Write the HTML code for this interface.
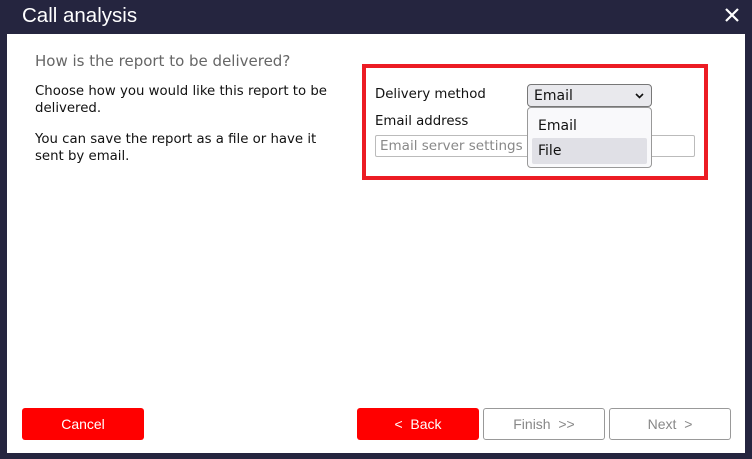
<!DOCTYPE html>
<html><head><style>
*{box-sizing:border-box;margin:0;padding:0}
body{width:752px;height:459px;background:#25253f;position:relative;overflow:hidden;font-family:"DejaVu Sans","Liberation Sans",sans-serif}
.t{position:absolute;left:22px;top:4px;color:#fff;font-size:20.5px;font-family:"Liberation Sans",sans-serif}
.x{position:absolute;left:724px;top:7px;width:16px;height:16px}
.c{position:absolute;left:7px;top:34px;width:738px;height:419px;background:#fff}
.a{position:absolute;font-size:13.3px;color:#111}
.btn{position:absolute;top:408px;width:122px;height:32px;border-radius:3px;font-size:14px;font-family:"Liberation Sans",sans-serif;display:flex;align-items:center;justify-content:center}
.r{background:#f00;color:#fff}
.g{border:1px solid #999;color:#888;background:#fff}
</style></head><body>
<div class="t">Call analysis</div>
<svg class="x" viewBox="0 0 16 16"><path d="M2 2L14 14M14 2L2 14" stroke="#fff" stroke-width="2.2"/></svg>
<div class="c"></div>
<div class="a" style="left:35px;top:52px;font-size:15px;color:#666">How is the report to be delivered?</div>
<div class="a" style="left:35px;top:83px;line-height:17px;width:310px">Choose how you would like this report to be delivered.</div>
<div class="a" style="left:35px;top:131px;line-height:17px;width:310px">You can save the report as a file or have it sent by email.</div>
<div style="position:absolute;left:362px;top:64px;width:346px;height:116px;border:4px solid #ec1c24"></div>
<div class="a" style="left:375px;top:87px">Delivery method</div>
<div class="a" style="left:375px;top:114px">Email address</div>
<div style="position:absolute;left:375px;top:135px;width:320px;height:22px;border:1px solid #bbb;border-radius:2px;font-size:13.5px;color:#888;padding:2px 4px;overflow:hidden;white-space:nowrap">Email server settings m</div>
<div style="position:absolute;left:527px;top:84px;width:125px;height:23px;border:1px solid #777;border-radius:4px;background:#e9e9ed;font-size:14px;padding:3px 6px;color:#111">Email
<svg style="position:absolute;right:7px;top:8px" width="9" height="6" viewBox="0 0 9 6"><path d="M1 1L4.5 4.5L8 1" stroke="#111" stroke-width="1.6" fill="none"/></svg></div>
<div style="position:absolute;left:527px;top:107px;width:125px;height:61px;border:1px solid #999;border-radius:4px;background:#f9f9fb">
<div style="position:absolute;left:10px;top:10px;font-size:14px;color:#111">Email</div>
<div style="position:absolute;left:4px;top:30px;width:115px;height:26px;background:#e0e0e6;border-radius:2px;font-size:14px;padding:5px 6px;color:#111">File</div>
</div>
<div class="btn r" style="left:22px">Cancel</div>
<div class="btn r" style="left:357px">&lt;&nbsp; Back</div>
<div class="btn g" style="left:483px">Finish &nbsp;&gt;&gt;</div>
<div class="btn g" style="left:609px">Next &nbsp;&gt;</div>
</body></html>
